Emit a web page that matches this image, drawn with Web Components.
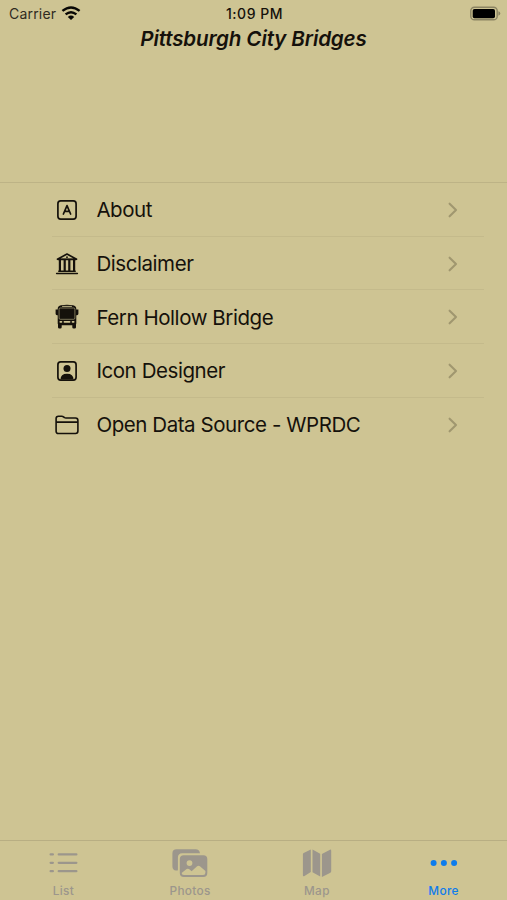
<!DOCTYPE html>
<html lang="en">
<head>
<meta charset="utf-8">
<title>Pittsburgh City Bridges</title>
<style>
html,body{margin:0;height:100%}
body{background:#cec493;font-family:Inter,"Liberation Sans",sans-serif;color:#15110b;overflow:hidden}
</style>
</head>
<body>
<bridge-app></bridge-app>
<script>
const define = (name, html) => customElements.define(name, class extends HTMLElement {
  constructor() {
    super();
    this.attachShadow({mode: 'open'}).innerHTML = html;
  }
});

const ICONS = {
  about: `<rect x="5.9" y="5.9" width="18.2" height="18.2" rx="2.8" fill="none" stroke="currentColor" stroke-width="1.7"/>
    <path d="M11.4 19 15 10.6 18.6 19M12.6 16.4H17.4" fill="none" stroke="currentColor" stroke-width="1.7" stroke-linejoin="round" stroke-linecap="round"/>`,
  columns: `<path d="M5.4 10.2 15 5 24.6 10.2Z" fill="none" stroke="currentColor" stroke-width="1.6" stroke-linejoin="round"/>
    <path d="M6 10.6H24M6.8 22.2H23.2M4.6 24.5H25.4" stroke="currentColor" stroke-width="1.5" stroke-linecap="round"/>
    <path d="M7.9 11V22M12.7 11V22M17.3 11V22M22.1 11V22" stroke="currentColor" stroke-width="2.2"/>
    <circle cx="15" cy="8.2" r=".9" fill="currentColor"/>`,
  bus: `<path d="M9 3.2Q15 2.2 21 3.2Q24.3 3.7 24.3 7V21.5Q24.3 23.2 22.6 23.2H7.4Q5.7 23.2 5.7 21.5V7Q5.7 3.7 9 3.2Z"/>
    <path d="M3.6 7.6H6V13.2H5Q3.6 13.2 3.6 11.8ZM26.4 7.6H24V13.2H25Q26.4 13.2 26.4 11.8ZM6 21H9.7V25.2Q9.7 26.6 8.3 26.6H7.4Q6 26.6 6 25.2ZM20.3 21H24V25.2Q24 26.6 22.6 26.6H21.7Q20.3 26.6 20.3 25.2Z"/>
    <g fill="none" stroke="#cec493"><path d="M10.5 4.4H19.5" stroke-width=".9" stroke-linecap="round"/><rect x="7.1" y="6" width="15.8" height="11.3" rx="1.2" stroke-width=".55"/><path d="M8.3 19.8H9.5M20.5 19.8H21.7M12.4 19.8H17.6" stroke-width="1.7" stroke-linecap="round"/></g>`,
  person: `<rect x="5.9" y="5.9" width="18.2" height="18.2" rx="2.8" fill="none" stroke="currentColor" stroke-width="1.7"/>
    <circle cx="15" cy="12.4" r="3.5"/><path d="M8.5 23.5Q8.5 17.7 15 17.7T21.5 23.5Z"/>`,
  folder: `<path d="M4.1 21.2V8.5Q4.1 6.2 6.4 6.2H9.8Q10.8 6.2 11.5 6.8L12.4 7.5Q13 8 14 8H23.5Q25.9 8 25.9 10.4V21.1Q25.9 23.5 23.5 23.5H6.5Q4.1 23.5 4.1 21.2ZM4.3 12.1H25.7" fill="none" stroke="currentColor" stroke-width="1.6" stroke-linejoin="round"/>`
};
const TABS = {
  list: `<g stroke="currentColor" stroke-width="2.2" stroke-linecap="round"><path d="M10.6 8.4H12.9M18.7 8.4H36.4M10.6 16.8H12.9M18.7 16.8H36.4M10.6 25.2H12.9M18.7 25.2H36.4"/></g>`,
  photos: `<g transform="translate(.6 0)"><path d="M8.4 24.6Q4.8 24.3 4.8 20.3V7.4Q4.8 3.2 9 3.2H28Q31.8 3.2 32.4 7.2H14.6Q10.3 7.2 10.3 11.7V23.4Q10.3 24.6 9.5 24.6Z"/>
    <path fill-rule="evenodd" d="M16.2 9.2H35.7Q39.7 9.2 39.7 13V27.1Q39.7 31 35.7 31H16.2Q12.2 31 12.2 27.1V13Q12.2 9.2 16.2 9.2ZM14 26.7Q14 29.1 16.3 29.1H35.5Q37.8 29.1 37.8 26.7V25.1L32.3 20.3Q30.9 19.2 29.5 20.3L24 25.2 21.4 23.1Q20.2 22.2 19 23.1L14 27.1ZM21.9 14.2A2.9 2.9 0 1 0 21.9 20A2.9 2.9 0 1 0 21.9 14.2Z"/></g>`,
  map: `<path d="M8.9 8.5Q8.9 7.6 9.7 7.1L16.8 3.4V26L10.5 30Q8.9 31 8.9 29.2ZM18.5 3.4 26.2 7.8V30.6L18.5 26.2ZM27.9 8 36 3.7Q37.2 3.2 37.2 4.8V25.3Q37.2 26.2 36.4 26.7L27.9 31Z"/>`,
  more: `<circle cx="12.6" cy="17" r="3"/><circle cx="22.9" cy="17" r="3"/><circle cx="33.1" cy="17" r="3"/>`
};

define('status-bar', `<style>
  :host{display:grid;grid-template-columns:1fr auto 1fr;align-items:center;height:26px;padding:1px 6px 0 9px;box-sizing:border-box;font-size:14px}
  .left{display:flex;align-items:center;gap:5px;color:#302b1f;letter-spacing:.2px}
  .time{font-weight:500;letter-spacing:.5px;margin-right:1px}
  .battery{justify-self:end}
  svg{display:block}
</style>
<div class="left"><span>Carrier</span>
<svg width="20" height="16" viewBox="0 0 20 16" fill="none" stroke="#090805" stroke-width="2.4"><path d="M1.4 4.9Q10-2.1 18.6 4.9M4.6 8.4Q10 4 15.4 8.4"/><path d="M6.8 10.9Q10 8.3 13.2 10.9L10 14.1Z" fill="#090805" stroke="none"/></svg></div>
<span class="time">1:09 PM</span>
<svg class="battery" width="32" height="16" viewBox="0 0 32 16"><rect x="1.8" y="1.2" width="26.4" height="12.6" rx="3.6" fill="none" stroke="#8b8463" stroke-width="1.4"/><rect x="3.7" y="3" width="22.3" height="9.2" rx="1.8" fill="#000"/><path d="M29.4 5.3Q31.3 5.9 31.3 7.5T29.4 9.7Z" fill="#8b8463"/></svg>`);

customElements.define('menu-row', class extends HTMLElement {
  constructor() {
    super();
    this.attachShadow({mode: 'open'}).innerHTML = `<style>
      :host{display:grid;grid-template-columns:30px 1fr 12px;column-gap:14.4px;align-items:center;height:53.7px;margin:0 23px 0 52px;padding:1px 25px 0 0;box-sizing:border-box;border-bottom:1px solid #c4ba8b;font-size:20.5px;letter-spacing:-.43px}
      :host(:last-child){border-bottom-color:transparent}
      span{white-space:nowrap}
      svg{display:block}
    </style>
    <svg width="30" height="30" viewBox="0 0 30 30" fill="currentColor">${ICONS[this.getAttribute('icon')]}</svg>
    <span><slot></slot></span>
    <svg width="12" height="18" viewBox="0 0 12 18" fill="none" stroke="#a0976f" stroke-width="2.1" stroke-linecap="round" stroke-linejoin="round"><path d="M2.6 2.7 9 9 2.6 15.3"/></svg>`;
  }
});

customElements.define('tab-item', class extends HTMLElement {
  constructor() {
    super();
    this.attachShadow({mode: 'open'}).innerHTML = `<style>
      :host{display:flex;flex-direction:column;align-items:center;padding-top:5px;color:#9c968c;font-size:11.8px;font-weight:500;letter-spacing:.35px}
      :host([active]){color:#0d7cec}
      svg{display:block}
      span{line-height:14px;margin-top:4px}
    </style>
    <svg width="46" height="34" viewBox="0 0 46 34" fill="currentColor">${TABS[this.getAttribute('icon')]}</svg>
    <span><slot></slot></span>`;
  }
});

define('bridge-app', `<style>
  :host{display:flex;flex-direction:column;height:900px;width:507px}
  h1{margin:0;height:156px;font-size:20.6px;line-height:25px;font-style:italic;font-weight:600;text-align:center;letter-spacing:-.15px;white-space:nowrap}
  main{flex:1;border-top:1px solid #bdb386}
  nav{display:grid;grid-template-columns:repeat(4,1fr);height:60px;box-sizing:border-box;border-top:1px solid #b8ae83}
</style>
<status-bar></status-bar>
<h1>Pittsburgh City Bridges</h1>
<main>
  <menu-row icon="about">About</menu-row>
  <menu-row icon="columns">Disclaimer</menu-row>
  <menu-row icon="bus">Fern Hollow Bridge</menu-row>
  <menu-row icon="person">Icon Designer</menu-row>
  <menu-row icon="folder">Open Data Source - WPRDC</menu-row>
</main>
<nav>
  <tab-item icon="list">List</tab-item>
  <tab-item icon="photos">Photos</tab-item>
  <tab-item icon="map">Map</tab-item>
  <tab-item icon="more" active>More</tab-item>
</nav>`);
</script>
</body>
</html>
